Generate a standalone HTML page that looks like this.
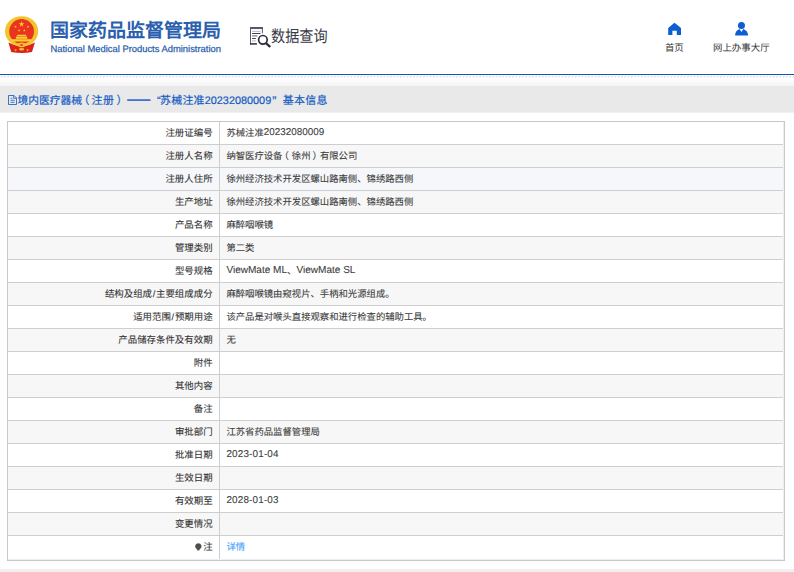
<!DOCTYPE html>
<html lang="zh-CN">
<head>
<meta charset="utf-8">
<title>国家药品监督管理局 数据查询</title>
<style>
html,body{margin:0;padding:0;}
body{width:794px;height:572px;overflow:hidden;position:relative;background:#fff;font-family:"Liberation Sans",sans-serif;color:#333;text-rendering:geometricPrecision;}
div,span{box-sizing:border-box;}
.abs{position:absolute;}
#emblem{left:0;top:10px;width:48px;height:48px;}
#title{left:50px;top:20px;font-size:19px;line-height:24px;font-weight:bold;color:#2b5fae;white-space:nowrap;letter-spacing:0px;}
#sub{left:50.5px;top:43px;font-size:9.38px;line-height:12px;color:#2b5fae;white-space:nowrap;-webkit-text-stroke:0.25px #2b5fae;}
#dq{left:244px;top:22px;width:40px;height:30px;}
#dqt{left:271.1px;top:26.4px;font-size:16.4px;line-height:22px;color:#3a3a48;white-space:nowrap;transform:scaleX(0.862);transform-origin:0 0;}
#home{left:660px;top:16px;width:40px;height:24px;}
#homet{left:644.3px;width:60px;text-align:center;top:41.7px;font-size:9.44px;line-height:12px;color:#333;}
#user{left:720px;top:16px;width:40px;height:24px;}
#usert{left:701.3px;width:80px;text-align:center;top:41.7px;font-size:9.44px;line-height:12px;color:#333;white-space:nowrap;}
#bline{left:0;top:74px;width:794px;height:1px;background:#0b5bb5;}
#hatch{left:0;top:75.4px;width:794px;height:3px;}
#shade{left:0;top:78px;width:794px;height:8px;background:linear-gradient(#fff,#f4f4f4);}
#bar{left:0;top:86px;width:794px;height:26px;background:#e9e9e9;}
#barline{left:0;top:112px;width:794px;height:1px;background:#f1f2f5;}
#bico{left:8px;top:95px;width:9px;height:10px;}
#btxt{left:0;top:93px;width:400px;height:16px;font-size:10.9px;line-height:16px;color:#155bc4;white-space:nowrap;-webkit-text-stroke:.2px #155bc4;}
#btxt span{position:absolute;top:0;}
#frame{left:7px;top:121px;width:778px;height:440px;border:1px solid #cac7c7;z-index:3;pointer-events:none;}
.r{position:absolute;left:8px;width:776px;border-top:1px solid #cecece;background:#fff;font-size:9.44px;line-height:12px;-webkit-text-stroke:.09px;}
.r.g{background:#f7f7f7;}
.r.hv{background:#f5f7fa;}
.k{position:absolute;left:0;top:0;bottom:0;padding-top:.9px;width:211px;text-align:right;padding-right:6.45px;white-space:nowrap;display:flex;align-items:center;justify-content:flex-end;color:#333;}
.v{position:absolute;left:212px;top:0;bottom:0;padding-top:.9px;right:0;padding-left:6.4px;white-space:nowrap;display:flex;align-items:center;color:#3c3c3c;font-size:9.36px;}
.lnk{color:#409eff;}
.l{font-size:9.9px;}
.l.d{letter-spacing:.18px;}
.l.m{font-size:10.05px;}
.sl{padding:0 .7px;}
.pl{position:relative;left:-.32em;}
.pr{position:relative;left:.2em;}
.bulb{width:6.7px;height:8.4px;margin-right:1.2px;position:relative;top:-0.4px;}
.last .k,.last .v{bottom:2.4px;}
#vline{left:219px;top:122px;width:1px;height:438px;background:#cecece;z-index:2;}
#inr{left:783px;top:122px;width:1px;height:438px;background:#ebeef5;z-index:2;}
#inb{left:8px;top:559px;width:776px;height:1px;background:#ebeef5;z-index:2;}
#foot{left:0;top:569px;width:794px;height:3px;background:#efefef;}
</style>
</head>
<body>
<svg id="emblem" class="abs" viewBox="0 10 48 48">
<path d="M8.4 42.6 L11.2 52 Q21.6 54 32 52 L34.9 42.6 Q21.6 50 8.4 42.6Z" fill="#dc241c"/>
<ellipse cx="21.6" cy="31.3" rx="16.6" ry="15.1" fill="#f4c52a"/>
<circle cx="21.6" cy="31.4" r="12.4" fill="#ea3420"/>
<g fill="#f8d330">
<polygon points="21.60,21.20 22.27,23.27 24.45,23.27 22.69,24.55 23.36,26.63 21.60,25.35 19.84,26.63 20.51,24.55 18.75,23.27 20.93,23.27"/>
<polygon points="15.50,25.40 15.81,26.37 16.83,26.37 16.01,26.97 16.32,27.93 15.50,27.33 14.68,27.93 14.99,26.97 14.17,26.37 15.19,26.37"/>
<polygon points="28.00,25.40 28.31,26.37 29.33,26.37 28.51,26.97 28.82,27.93 28.00,27.33 27.18,27.93 27.49,26.97 26.67,26.37 27.69,26.37"/>
<polygon points="19.10,29.00 19.41,29.97 20.43,29.97 19.61,30.57 19.92,31.53 19.10,30.93 18.28,31.53 18.59,30.57 17.77,29.97 18.79,29.97"/>
<polygon points="24.30,29.00 24.61,29.97 25.63,29.97 24.81,30.57 25.12,31.53 24.30,30.93 23.48,31.53 23.79,30.57 22.97,29.97 23.99,29.97"/>
<path d="M17.4 34.8h8.4l.6 1.3h-9.6z"/>
<path d="M16.2 36.5h10.8l.5 2.2h-11.8z"/>
<path d="M11.6 39.2h20l.4 2.4h-20.8z"/>
</g>
<ellipse cx="21.6" cy="44.9" rx="3.6" ry="2.3" fill="#f4c52a"/>
<ellipse cx="21.6" cy="44.9" rx="1.8" ry="1.0" fill="#e8502a"/>
<ellipse cx="21.6" cy="49.2" rx="2.6" ry="1.3" fill="#f4c52a"/>
<path d="M14.2 49.2l1.6 2.2 1-2zM29 49.2l-1.6 2.2-1-2z" fill="#f4c52a"/>
</svg>
<div id="title" class="abs">国家药品监督管理局</div>
<div id="sub" class="abs">National Medical Products Administration</div>
<svg id="dq" class="abs" viewBox="244 22 40 30">
<g fill="none" stroke="#2b2b3d" stroke-linecap="butt">
<path d="M250 28h13" stroke-width="1.6"/>
<path d="M250.5 27.2V44.6" stroke-width="1" stroke="#5a5a6c"/>
<path d="M262.4 27.2V33.2" stroke-width="1" stroke="#5a5a6c"/>
<path d="M250 43.9h6.9" stroke-width="1.5"/>
<path d="M252.1 31.3h8.4" stroke="#b4b4bc" stroke-width="1"/>
<path d="M252.1 33.5h8.4" stroke-width="0.9"/>
<path d="M252.1 35.9h5.3" stroke="#6a6a7a" stroke-width="1.1"/>
<path d="M252.1 38.5h3.7" stroke-width="0.9"/>
<path d="M252.1 40.9h3.7" stroke="#b4b4bc" stroke-width="1"/>
<circle cx="262.9" cy="39.8" r="4.3" stroke-width="1.7"/>
<path d="M266.2 43.3L270.3 47" stroke-width="2.3"/>
</g></svg>
<div id="dqt" class="abs">数据查询</div>
<svg id="home" class="abs" viewBox="660 16 40 24"><path d="M674.5 22.8L681 28V34.9H676.8V30.7H672.4V34.9H668.2V28Z" fill="#0b5fd0"/></svg>
<div id="homet" class="abs">首页</div>
<svg id="user" class="abs" viewBox="720 16 40 24"><circle cx="741.45" cy="25.5" r="3.5" fill="#0b5fd0"/><path d="M735.1 35.6C735.1 32.2 737 29.9 739.6 29.1L741.45 31.9L743.3 29.1C745.9 29.9 748.15 32.2 748.15 35.6Z" fill="#0b5fd0"/></svg>
<div id="usert" class="abs">网上办事大厅</div>
<div id="bline" class="abs"></div>
<svg id="hatch" class="abs" viewBox="0 0 794 3"><defs><pattern id="hp" width="3.3" height="3" patternUnits="userSpaceOnUse"><path d="M0.6 2.6L2.4 0.8" stroke="#c4c4c4" stroke-width="0.8" fill="none"/></pattern></defs><rect width="794" height="3" fill="url(#hp)"/></svg>
<div id="shade" class="abs"></div>
<div id="bar" class="abs"></div>
<div id="barline" class="abs"></div>
<svg id="bico" class="abs" viewBox="0 0 9 10"><path d="M0.5 0.5H6L8.5 3V9.5H0.5Z" fill="none" stroke="#1a5ec6" stroke-width="0.85"/><path d="M5.6 0.6V3.3H8.4" fill="none" stroke="#1a5ec6" stroke-width="0.8"/><path d="M2.6 3.3H4.2M2.6 5.3H6.6M2.6 7.3H6.6" stroke="#1a5ec6" stroke-width="0.8"/></svg>
<div id="btxt" class="abs"><span style="left:17.5px;font-size:10.75px">境内医疗器械</span><span style="left:78.4px">（</span><span style="left:91.5px;letter-spacing:.5px">注册</span><span style="left:116.4px">）</span><span style="left:127.3px;font-size:11.5px;top:-1.3px;-webkit-text-stroke:.35px #155bc4">——</span><span style="left:157.1px">“</span><span style="left:160px;letter-spacing:.3px">苏械注准</span><span style="left:204.7px;font-size:10.88px">20232080009</span><span style="left:272.2px;font-size:12.5px">”</span><span style="left:282.7px;letter-spacing:.4px">基本信息</span></div>
<!--ROWS-->
<div class="r" style="top:121px;height:23px"><div class="k">注册证编号</div><div class="v">苏械注准<span class="l">20232080009</span></div></div>
<div class="r g" style="top:144px;height:23px"><div class="k">注册人名称</div><div class="v">纳智医疗设备<span class="pl">（</span>徐州<span class="pr">）</span>有限公司</div></div>
<div class="r hv" style="top:167px;height:23px"><div class="k">注册人住所</div><div class="v">徐州经济技术开发区螺山路南侧、锦绣路西侧</div></div>
<div class="r g" style="top:190px;height:23px"><div class="k">生产地址</div><div class="v">徐州经济技术开发区螺山路南侧、锦绣路西侧</div></div>
<div class="r" style="top:213px;height:23px"><div class="k">产品名称</div><div class="v">麻醉咽喉镜</div></div>
<div class="r g" style="top:236px;height:23px"><div class="k">管理类别</div><div class="v">第二类</div></div>
<div class="r" style="top:259px;height:23px"><div class="k">型号规格</div><div class="v"><span class="l m">ViewMate ML</span>、<span class="l m">ViewMate SL</span></div></div>
<div class="r g" style="top:282px;height:23px"><div class="k">结构及组成<span class="sl">/</span>主要组成成分</div><div class="v">麻醉咽喉镜由窥视片、手柄和光源组成。</div></div>
<div class="r" style="top:305px;height:23px"><div class="k">适用范围<span class="sl">/</span>预期用途</div><div class="v">该产品是对喉头直接观察和进行检查的辅助工具。</div></div>
<div class="r g" style="top:328px;height:23px"><div class="k">产品储存条件及有效期</div><div class="v">无</div></div>
<div class="r" style="top:351px;height:23px"><div class="k">附件</div><div class="v"></div></div>
<div class="r g" style="top:374px;height:23px"><div class="k">其他内容</div><div class="v"></div></div>
<div class="r" style="top:397px;height:23px"><div class="k">备注</div><div class="v"></div></div>
<div class="r g" style="top:420px;height:23px"><div class="k">审批部门</div><div class="v">江苏省药品监督管理局</div></div>
<div class="r" style="top:443px;height:23px"><div class="k">批准日期</div><div class="v"><span class="l d">2023-01-04</span></div></div>
<div class="r g" style="top:466px;height:23px"><div class="k">生效日期</div><div class="v"></div></div>
<div class="r" style="top:489px;height:23px"><div class="k">有效期至</div><div class="v"><span class="l d">2028-01-03</span></div></div>
<div class="r g" style="top:512px;height:23px"><div class="k">变更情况</div><div class="v"></div></div>
<div class="r last" style="top:535px;height:25px"><div class="k"><svg class="bulb" viewBox="0 0 7 8.6"><path d="M3.5 0.1a3.3 3.3 0 0 0-2 5.9c.5.4.7.8.8 1.2h2.4c.1-.4.3-.8.8-1.2a3.3 3.3 0 0 0-2-5.9z" fill="#4e4e4e"/><path d="M2.3 7.2h2.4v.7c0 .4-.3.7-.7.7h-1c-.4 0-.7-.3-.7-.7z" fill="#b9b9b9"/></svg>注</div><div class="v"><span class="lnk">详情</span></div></div>
<!--/ROWS-->
<div id="vline" class="abs"></div>
<div id="inr" class="abs"></div>
<div id="inb" class="abs"></div>
<div id="frame" class="abs"></div>
<div id="foot" class="abs"></div>
</body>
</html>
